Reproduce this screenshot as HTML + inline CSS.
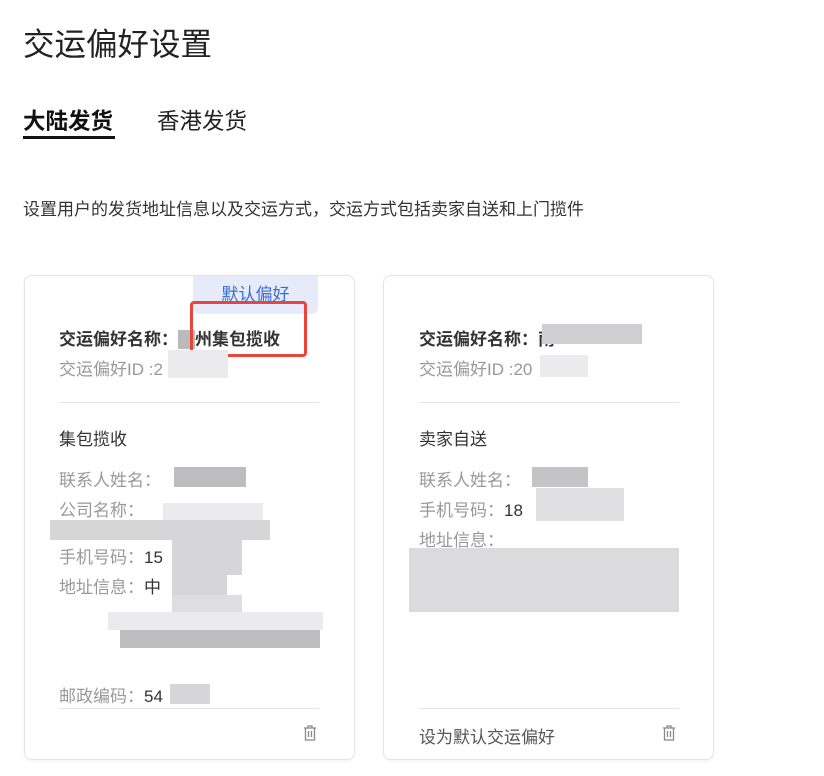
<!DOCTYPE html>
<html><head><meta charset="utf-8"><style>
*{margin:0;padding:0;box-sizing:border-box}
body{width:824px;height:776px;background:#fff;font-family:"Liberation Sans","Noto Sans CJK SC",sans-serif;position:relative;overflow:hidden;color:#333}
.a{position:absolute;white-space:nowrap}
.card{position:absolute;top:275px;width:331px;height:485px;border:1.5px solid #e3e5e8;border-radius:8px;box-shadow:0 1px 3px rgba(0,0,0,.06)}
.g{color:#999;font-size:17px}
.k{color:#333;font-size:17px}
.hr{position:absolute;height:1px;background:#e5e5e5}
.b{position:absolute;background:#d6d6d8}
.l{position:absolute;background:#ebebed}
</style></head><body>
<div class="a" style="left:23px;top:19px;font-size:31.5px;color:#222">交运偏好设置</div>
<div class="a" style="left:23px;top:104px;font-size:22.5px;font-weight:bold;color:#111">大陆发货</div>
<div class="a" style="left:23px;top:136px;width:92px;height:3px;background:#111"></div>
<div class="a" style="left:157px;top:104px;font-size:22.5px;color:#222">香港发货</div>
<div class="a" style="left:23px;top:195px;font-size:17px;color:#333">设置用户的发货地址信息以及交运方式，交运方式包括卖家自送和上门揽件</div>

<div class="card" style="left:24px"></div>
<div class="a" style="left:193px;top:276px;width:125px;height:38px;background:#e6eaf9;border-radius:0 0 6px 6px;color:#3a6fd8;font-size:17px;text-align:center;line-height:38px">默认偏好</div>
<div class="a k" style="left:59px;top:325px;font-weight:bold">交运偏好名称：<span style="background:#bbb;color:#bbb">广</span>州集包揽收</div>
<div class="a" style="left:190px;top:301px;width:117px;height:56px;border:3px solid #e8453c;border-radius:4px"></div>
<div class="a g" style="left:59px;top:355px">交运偏好ID :2</div>
<div class="l" style="left:168px;top:350px;width:60px;height:28px"></div>
<div class="hr" style="left:59px;top:402px;width:260px"></div>
<div class="a k" style="left:59px;top:425px">集包揽收</div>
<div class="a g" style="left:59px;top:466px">联系人姓名：</div>
<div class="b" style="left:174px;top:467px;width:72px;height:20px;background:#bdbdbf"></div>
<div class="a g" style="left:59px;top:496px">公司名称：</div>
<div class="l" style="left:163px;top:503px;width:100px;height:20px"></div>
<div class="b" style="left:50px;top:520px;width:220px;height:20px"></div>
<div class="a g" style="left:59px;top:543px">手机号码：<span style="color:#333">15</span></div>
<div class="b" style="left:172px;top:540px;width:70px;height:35px"></div>
<div class="a g" style="left:59px;top:573px">地址信息：<span style="color:#333">中</span></div>
<div class="b" style="left:172px;top:575px;width:55px;height:20px"></div>
<div class="b" style="left:172px;top:595px;width:70px;height:18px;background:#dedee0"></div>
<div class="l" style="left:108px;top:612px;width:215px;height:18px"></div>
<div class="b" style="left:120px;top:630px;width:200px;height:18px;background:#bdbdbf"></div>
<div class="a g" style="left:59px;top:682px">邮政编码：<span style="color:#333">54</span></div>
<div class="b" style="left:170px;top:684px;width:40px;height:20px"></div>
<div class="hr" style="left:59px;top:708px;width:260px"></div>
<svg class="a" style="left:303px;top:725px" width="14" height="16" viewBox="0 0 14 16" fill="none" stroke="#888" stroke-width="1.3"><path d="M1 3h12M5 3V1h4v2M2.5 3v12h9V3M5.5 6v6M8.5 6v6"/></svg>

<div class="card" style="left:383px"></div>
<div class="a k" style="left:419px;top:325px;font-weight:bold">交运偏好名称：南</div>
<div class="b" style="left:542px;top:324px;width:100px;height:20px;background:#cfcfd1"></div>
<div class="a g" style="left:419px;top:355px">交运偏好ID :20</div>
<div class="l" style="left:540px;top:355px;width:48px;height:22px"></div>
<div class="hr" style="left:419px;top:402px;width:260px"></div>
<div class="a k" style="left:419px;top:425px">卖家自送</div>
<div class="a g" style="left:419px;top:466px">联系人姓名：</div>
<div class="b" style="left:532px;top:467px;width:56px;height:20px;background:#c4c4c6"></div>
<div class="a g" style="left:419px;top:496px">手机号码：<span style="color:#333">18</span></div>
<div class="b" style="left:536px;top:488px;width:88px;height:33px;background:#e0e0e2"></div>
<div class="a g" style="left:419px;top:526px">地址信息：</div>
<div class="b" style="left:409px;top:548px;width:270px;height:64px;background:#dbdbdd"></div>
<div class="hr" style="left:419px;top:708px;width:260px"></div>
<div class="a" style="left:419px;top:723px;font-size:17px;color:#555">设为默认交运偏好</div>
<svg class="a" style="left:662px;top:725px" width="14" height="16" viewBox="0 0 14 16" fill="none" stroke="#888" stroke-width="1.3"><path d="M1 3h12M5 3V1h4v2M2.5 3v12h9V3M5.5 6v6M8.5 6v6"/></svg>
</body></html>
